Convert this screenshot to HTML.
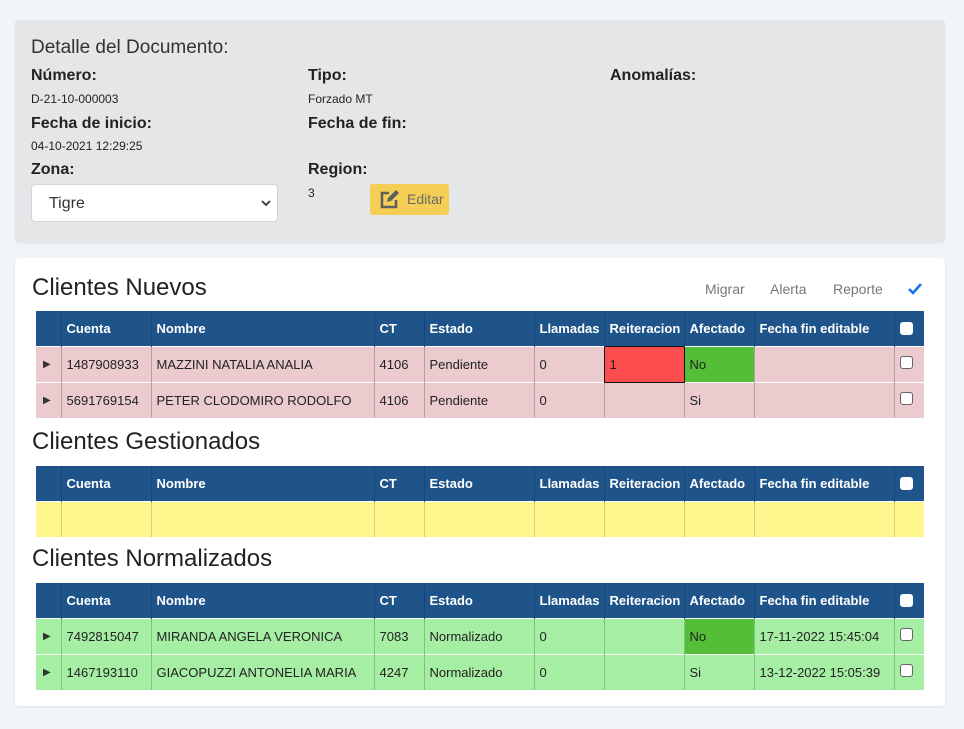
<!DOCTYPE html>
<html><head><meta charset="utf-8"><style>
*{box-sizing:border-box;margin:0;padding:0}
body{width:964px;height:729px;background:#f1f4f8;font-family:"Liberation Sans",sans-serif;color:#222;position:relative;overflow:hidden}
.card1{position:absolute;left:15px;top:20px;width:930px;height:222px;background:#e5e6e8;border-radius:4px;box-shadow:0 1px 2px rgba(0,0,0,.08)}
.card2{position:absolute;left:15px;top:258px;width:930px;height:448px;background:#fff;border-radius:4px;box-shadow:0 1px 2px rgba(0,0,0,.08)}
.a{position:absolute;white-space:nowrap}
.lbl{font-weight:bold;font-size:16px;color:#222}
.val{font-size:12px;color:#222}
.h2{font-size:24px;color:#222}
table{position:absolute;left:21px;width:888px;border-collapse:collapse;table-layout:fixed;font-size:13px}
th{background:#1f548a;color:#fff;font-weight:bold;text-align:left;padding:0 5px;height:35px;border-left:1px solid #174574}
th:first-child{border-left:none}
td{padding:0 5px;border-left:1px solid #b8a0a2;height:36px;color:#222}
td:first-child{border-left:none;padding-left:7px;font-size:10px;color:#333}
tr+tr td{border-top:1px solid #fff}
.p td{background:#ebcbcd}
.g td{background:#a6eea4;border-left-color:#7fc47d}
.y td{background:#fdf68c;border-left-color:#d6cf70}
.cb{display:inline-block;width:13px;height:13px;border:1px solid #666;border-radius:3px;background:#fff;vertical-align:middle;position:relative;top:-3px}
th .cb{border-color:#fff;top:-1px}
</style></head><body>
<div class="card1">
<div class="a" style="left:16px;top:17px;font-size:19px;color:#333">Detalle del Documento:</div>
<div class="a lbl" style="left:16px;top:47px">Número:</div>
<div class="a val" style="left:16px;top:72px">D-21-10-000003</div>
<div class="a lbl" style="left:16px;top:95px">Fecha de inicio:</div>
<div class="a val" style="left:16px;top:119px">04-10-2021 12:29:25</div>
<div class="a lbl" style="left:16px;top:141px">Zona:</div>
<div class="a" style="left:16px;top:164px;width:247px;height:38px;background:#fff;border:1px solid #ced4da;border-radius:4px;font-size:16px;padding:10px 0 0 17px;color:#333">Tigre
<svg style="position:absolute;right:6px;top:14px" width="10" height="8" viewBox="0 0 10 8"><path d="M1 2l4 4 4-4" stroke="#333" stroke-width="1.8" fill="none"/></svg></div>
<div class="a lbl" style="left:293px;top:47px">Tipo:</div>
<div class="a val" style="left:293px;top:72px">Forzado MT</div>
<div class="a lbl" style="left:293px;top:95px">Fecha de fin:</div>
<div class="a lbl" style="left:293px;top:141px">Region:</div>
<div class="a val" style="left:293px;top:166px">3</div>
<div class="a" style="left:355px;top:164px;width:79px;height:31px;background:#f5ce55;border-radius:3px;color:#6a6a6a;font-size:14px;padding:7px 0 0 37px">Editar
<svg style="position:absolute;left:9px;top:5px" width="22" height="20" viewBox="0 0 22 20"><path d="M10 4H3v14h14v-7" stroke="#5f5f5f" stroke-width="2.6" fill="none"/><path d="M8 13l1-4 8-8 3 3-8 8z" fill="#5f5f5f"/></svg></div>
<div class="a lbl" style="left:595px;top:47px">Anomalías:</div>
</div>
<div class="card2">
<div class="a h2" style="left:17px;top:16px">Clientes Nuevos</div>
<div class="a" style="left:690px;top:23px;font-size:14px;color:#777">Migrar</div>
<div class="a" style="left:755px;top:23px;font-size:14px;color:#777">Alerta</div>
<div class="a" style="left:818px;top:23px;font-size:14px;color:#777">Reporte</div>
<svg class="a" style="left:892px;top:24px" width="16" height="14" viewBox="0 0 16 14"><path d="M2 7l4 4 8-9" stroke="#1a73e8" stroke-width="2.6" fill="none"/></svg>
<table style="top:53px">
<colgroup><col style="width:25px"><col style="width:90px"><col style="width:223px"><col style="width:50px"><col style="width:110px"><col style="width:70px"><col style="width:80px"><col style="width:70px"><col style="width:140px"><col style="width:30px"></colgroup>
<tr><th></th><th>Cuenta</th><th>Nombre</th><th>CT</th><th>Estado</th><th>Llamadas</th><th>Reiteracion</th><th>Afectado</th><th>Fecha fin editable</th><th><span class="cb"></span></th></tr>
<tr class="p"><td>▶</td><td>1487908933</td><td>MAZZINI NATALIA ANALIA</td><td>4106</td><td>Pendiente</td><td>0</td><td style="background:#fe4d4f;border:1px solid #111">1</td><td style="background:#53bf38">No</td><td></td><td><span class="cb"></span></td></tr>
<tr class="p"><td>▶</td><td>5691769154</td><td>PETER CLODOMIRO RODOLFO</td><td>4106</td><td>Pendiente</td><td>0</td><td></td><td>Si</td><td></td><td><span class="cb"></span></td></tr>
</table>
<div class="a h2" style="left:17px;top:170px">Clientes Gestionados</div>
<table style="top:208px">
<colgroup><col style="width:25px"><col style="width:90px"><col style="width:223px"><col style="width:50px"><col style="width:110px"><col style="width:70px"><col style="width:80px"><col style="width:70px"><col style="width:140px"><col style="width:30px"></colgroup>
<tr><th></th><th>Cuenta</th><th>Nombre</th><th>CT</th><th>Estado</th><th>Llamadas</th><th>Reiteracion</th><th>Afectado</th><th>Fecha fin editable</th><th><span class="cb"></span></th></tr>
<tr class="y"><td></td><td></td><td></td><td></td><td></td><td></td><td></td><td></td><td></td><td></td></tr>
</table>
<div class="a h2" style="left:17px;top:287px">Clientes Normalizados</div>
<table style="top:325px">
<colgroup><col style="width:25px"><col style="width:90px"><col style="width:223px"><col style="width:50px"><col style="width:110px"><col style="width:70px"><col style="width:80px"><col style="width:70px"><col style="width:140px"><col style="width:30px"></colgroup>
<tr><th></th><th>Cuenta</th><th>Nombre</th><th>CT</th><th>Estado</th><th>Llamadas</th><th>Reiteracion</th><th>Afectado</th><th>Fecha fin editable</th><th><span class="cb"></span></th></tr>
<tr class="g"><td>▶</td><td>7492815047</td><td>MIRANDA ANGELA VERONICA</td><td>7083</td><td>Normalizado</td><td>0</td><td></td><td style="background:#53bf38">No</td><td>17-11-2022 15:45:04</td><td><span class="cb"></span></td></tr>
<tr class="g"><td>▶</td><td>1467193110</td><td>GIACOPUZZI ANTONELIA MARIA</td><td>4247</td><td>Normalizado</td><td>0</td><td></td><td>Si</td><td>13-12-2022 15:05:39</td><td><span class="cb"></span></td></tr>
</table>
</div>
</body></html>
